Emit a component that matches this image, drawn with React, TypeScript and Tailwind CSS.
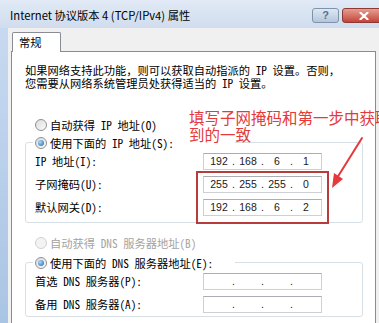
import { Fragment } from 'react';

const dlgFont = "font-['Noto_Sans_Mono_CJK_SC','Noto_Sans_CJK_SC',sans-serif]";

function Radio({ checked, disabled }: { checked?: boolean; disabled?: boolean }) {
  return (
    <span
      className={`flex h-[12px] w-[12px] shrink-0 items-center justify-center rounded-full border ${
        disabled
          ? 'border-[#cfd1d4] bg-[#f3f3f3]'
          : 'border-[#8f9092] bg-gradient-to-br from-[#dcdcdc] to-[#fbfbfb]'
      }`}
    >
      {checked && (
        <span className="h-[6px] w-[6px] rounded-full bg-[radial-gradient(circle_at_35%_35%,#a8dcff,#1d5fae)]" />
      )}
    </span>
  );
}

function IpBox({ parts }: { parts?: string[] }) {
  const segs = parts ?? ['', '', '', ''];
  return (
    <div className="flex h-[17px] w-[119px] shrink-0 items-center border border-[#cdd0d5] border-t-[#abadb3] bg-white pl-[2px] font-['Liberation_Sans',sans-serif] text-[10.5px] leading-none text-[#1a1a1a]">
      {segs.map((p, i) => (
        <Fragment key={i}>
          {i > 0 && <span className="flex w-[3px] justify-center">.</span>}
          <span className="w-[26px] text-center">{p}</span>
        </Fragment>
      ))}
    </div>
  );
}

function FieldRow({ label, parts }: { label: string; parts?: string[] }) {
  return (
    <div className="flex h-[23px] items-center">
      <span className="w-[177px] shrink-0 pl-[9px]">{label}</span>
      <IpBox parts={parts} />
    </div>
  );
}

function RadioRow({
  label,
  checked,
  disabled,
}: {
  label: string;
  checked?: boolean;
  disabled?: boolean;
}) {
  return (
    <div className={`flex h-[18px] items-center gap-[3px] ${disabled ? 'text-[#a3a3a3]' : ''}`}>
      <Radio checked={checked} disabled={disabled} />
      <span>{label}</span>
    </div>
  );
}

function Group({ legend, children }: { legend: string; children: React.ReactNode }) {
  return (
    <fieldset className="ml-[13px] w-[338px] rounded-[3px] border border-[#d5dfe5]">
      <legend className="ml-[7px] h-[16px] w-[202px] pl-[2px]">
        <RadioRow label={legend} checked />
      </legend>
      {children}
    </fieldset>
  );
}

export default function App() {
  return (
    <div className="relative flex h-[323px] w-[379px] flex-col overflow-hidden bg-[#f0f0f0]">
      {/* title bar */}
      <div className="flex h-[28px] shrink-0 bg-gradient-to-b from-[#e1eaf5] to-[#d0ddee]">
        <span className="mt-[7px] w-[312px] shrink-0 pl-[10px] font-['Noto_Sans_CJK_SC',sans-serif] text-[11.25px] leading-[16px] text-black">
          Internet 协议版本 4 (TCP/IPv4) 属性
        </span>
        <div className="mt-[8px] flex shrink-0 gap-[3px]">
          <div className="flex h-[15px] w-[27px] items-center justify-center rounded-[3px] border border-[#7f93ad] bg-gradient-to-b from-[#dfe8f3] to-[#b4c6dd] font-['Liberation_Sans',sans-serif] text-[11px] font-bold leading-none text-[#5b6f8a]">
            ?
          </div>
          <div className="flex h-[15px] w-[43px] items-center justify-center rounded-[3px] border border-[#8e3a33] bg-gradient-to-b from-[#e59d91] to-[#c3433a]">
            <svg width="10" height="8" viewBox="0 0 10 8">
              <path d="M1.5 0.8 L8.5 7.2 M8.5 0.8 L1.5 7.2" stroke="#fff" strokeWidth="2.2" strokeLinecap="round" />
            </svg>
          </div>
        </div>
      </div>

      <div className="flex flex-1">
        {/* left frame */}
        <div className="w-[8px] shrink-0 bg-gradient-to-b from-[#c7d9f0] to-[#a8c3e3]" />
        <div className="flex flex-col pl-[3px] pt-[4px]">
          {/* tab */}
          <div
            className={`relative z-10 -mb-px ml-[1px] flex h-[20px] w-[49px] items-center rounded-t-[2px] border border-b-0 border-[#898c95] bg-white pl-[6px] text-[11.25px] ${dlgFont}`}
          >
            常规
          </div>
          {/* panel */}
          <div
            className={`h-[290px] w-[365px] border border-[#898c95] bg-white pt-[12px] text-[11.25px] leading-[12.5px] text-black ${dlgFont}`}
          >
            <p className="pl-[13px]">
              如果网络支持此功能，则可以获取自动指派的 IP 设置。否则，
              <br />
              您需要从网络系统管理员处获得适当的 IP 设置。
            </p>

            <div className="mt-[27px] pl-[23px]">
              <RadioRow label="自动获得 IP 地址(O)" />
            </div>
            <Group legend="使用下面的 IP 地址(S):">
              <FieldRow label="IP 地址(I):" parts={['192', '168', '6', '1']} />
              <FieldRow label="子网掩码(U):" parts={['255', '255', '255', '0']} />
              <FieldRow label="默认网关(D):" parts={['192', '168', '6', '2']} />
              <div className="h-[3px]" />
            </Group>

            <div className="mt-[11px] pl-[23px]">
              <RadioRow label="自动获得 DNS 服务器地址(B)" disabled />
            </div>
            <div className="mt-[2px]">
              <Group legend="使用下面的 DNS 服务器地址(E):">
                <FieldRow label="首选 DNS 服务器(P):" />
                <FieldRow label="备用 DNS 服务器(A):" />
              </Group>
            </div>
          </div>
        </div>
      </div>

      {/* red annotation */}
      <div className="absolute left-[189px] top-[109px] whitespace-nowrap font-['Noto_Sans_CJK_SC',sans-serif] text-[15.5px] leading-[17px] text-[#e5393b]">
        填写子网掩码和第一步中获取
        <br />
        到的一致
      </div>
      <div className="absolute left-[196px] top-[171px] h-[53px] w-[133px] border-2 border-[#b83c3c]" />
      <svg className="absolute left-[325px] top-[132px]" width="44" height="62" viewBox="0 0 44 62">
        <path d="M37 6 L12 46" stroke="#e5393b" strokeWidth="2" strokeLinecap="round" />
        <path d="M7 56 L9 41 L18 47 Z" fill="#e5393b" />
      </svg>
    </div>
  );
}
